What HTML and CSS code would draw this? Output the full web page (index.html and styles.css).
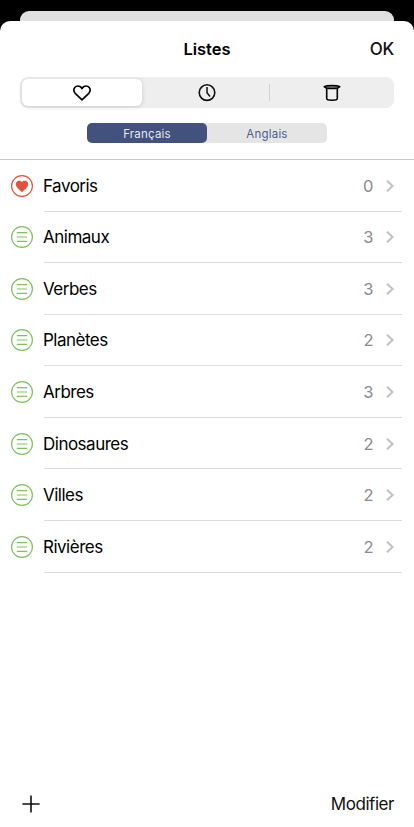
FILE: index.html
```
<!DOCTYPE html>
<html lang="fr">
<head>
<meta charset="utf-8">
<title>Listes</title>
<link rel="stylesheet" href="styles.css">
</head>
<body>
<svg width="0" height="0" class="defs">
  <symbol id="list" viewBox="0 0 22 22">
    <circle cx="11" cy="11" r="10.4" fill="none" stroke="#7fc15c" stroke-width="1.2"/>
    <path d="M5.8 6.6h10.4M5.8 11h10.4M5.8 15.4h10.4" fill="none" stroke="#7fc15c" stroke-width="1.1"/>
  </symbol>
  <symbol id="favorite" viewBox="0 0 22 22">
    <circle cx="11" cy="11" r="10.4" fill="none" stroke="#e0523a" stroke-width="1.2"/>
    <path d="M11 17.2C9.5 15.5 4.9 12.6 4.9 9.2C4.9 7.2 6.2 5.8 8 5.8C9.4 5.8 10.4 6.2 11 7C11.6 6.2 12.6 5.8 14 5.8C15.8 5.8 17.1 7.2 17.1 9.2C17.1 12.6 12.5 15.5 11 17.2Z" fill="#e0523a"/>
  </symbol>
  <symbol id="chevron" viewBox="0 0 8 12">
    <path d="M1 .7L6.6 6L1 11.3" fill="none" stroke="#c0c0c3" stroke-width="2"/>
  </symbol>
</svg>
<div class="backdrop"></div>
<main class="sheet">
  <header class="header">
    <div class="titlebar"><h1 class="title">Listes</h1><span class="ok">OK</span></div>
    <nav class="tabs">
      <div class="tab active">
        <svg width="18" height="16" viewBox="0 0 18 16"><path d="M9 14.8L2.2 8.3C.4 6.1 .8 3.8 1.8 2.6C3.2 .9 5.4 .8 7 1.5C8 2 8.6 2.7 9 3.6C9.4 2.7 10 2 11 1.5C12.6 .8 14.8 .9 16.2 2.6C17.2 3.8 17.6 6.1 15.8 8.3Z" fill="none" stroke="#000" stroke-width="1.6" stroke-linejoin="round"/></svg>
      </div>
      <div class="tab recent">
        <svg width="18" height="18" viewBox="0 0 18 18"><circle cx="9" cy="8.6" r="7.8" fill="none" stroke="#111" stroke-width="1.6"/><path d="M9 3.1V8.8L12 12.4" fill="none" stroke="#111" stroke-width="1.5"/></svg>
      </div>
      <div class="tab last">
        <svg width="18" height="18" viewBox="0 0 18 18"><path d="M3.7 4V14.5C3.7 16.8 14.3 16.8 14.3 14.5V4" fill="none" stroke="#000" stroke-width="1.6"/><path d="M1.2 2.6C4 1.2 14 1.2 16.8 2.6L15 4C11 4.8 7 4.8 3 4Z" fill="#777" stroke="#000" stroke-width="1.5" stroke-linejoin="round"/></svg>
      </div>
    </nav>
    <div class="languages"><span class="language selected">Français</span><span class="language">Anglais</span></div>
  </header>
  <ul class="lists">
    <li class="row"><svg class="icon"><use href="#favorite"/></svg><div class="entry"><span class="name">Favoris</span><span class="count">0</span><svg class="chevron"><use href="#chevron"/></svg></div></li>
    <li class="row"><svg class="icon"><use href="#list"/></svg><div class="entry"><span class="name">Animaux</span><span class="count">3</span><svg class="chevron"><use href="#chevron"/></svg></div></li>
    <li class="row"><svg class="icon"><use href="#list"/></svg><div class="entry"><span class="name">Verbes</span><span class="count">3</span><svg class="chevron"><use href="#chevron"/></svg></div></li>
    <li class="row"><svg class="icon"><use href="#list"/></svg><div class="entry"><span class="name">Planètes</span><span class="count">2</span><svg class="chevron"><use href="#chevron"/></svg></div></li>
    <li class="row"><svg class="icon"><use href="#list"/></svg><div class="entry"><span class="name">Arbres</span><span class="count">3</span><svg class="chevron"><use href="#chevron"/></svg></div></li>
    <li class="row"><svg class="icon"><use href="#list"/></svg><div class="entry"><span class="name">Dinosaures</span><span class="count">2</span><svg class="chevron"><use href="#chevron"/></svg></div></li>
    <li class="row"><svg class="icon"><use href="#list"/></svg><div class="entry"><span class="name">Villes</span><span class="count">2</span><svg class="chevron"><use href="#chevron"/></svg></div></li>
    <li class="row"><svg class="icon"><use href="#list"/></svg><div class="entry"><span class="name">Rivières</span><span class="count">2</span><svg class="chevron"><use href="#chevron"/></svg></div></li>
  </ul>
  <footer class="toolbar">
    <svg width="18" height="18" viewBox="0 0 18 18"><path d="M9 .4V17.6M.4 9H17.6" stroke="#111" stroke-width="1.6"/></svg>
    <span class="edit">Modifier</span>
  </footer>
</main>
</body>
</html>
```
FILE: styles.css
```
* { box-sizing: border-box; }
body {
  margin: 0;
  height: 827px;
  padding-top: 11px;
  display: flex;
  flex-direction: column;
  overflow: hidden;
  background: #000;
  color: #000;
  font-family: Inter, "Liberation Sans", sans-serif;
  font-size: 17px;
}
.defs { position: absolute; }
.backdrop {
  flex: none;
  height: 10px;
  margin: 0 20px;
  background: #e0e0e0;
  border-radius: 9px 9px 0 0;
}
.sheet {
  flex: 1;
  display: flex;
  flex-direction: column;
  background: #fff;
  border-radius: 10px 10px 0 0;
}
.header {
  height: 139px;
  padding: 0 20px;
  border-bottom: 1px solid #c6c6c6;
}
.titlebar {
  display: grid;
  grid-template-columns: 1fr auto 1fr;
  align-items: center;
  height: 56px;
}
.title {
  grid-column: 2;
  margin: 0;
  font-size: 16.5px;
  font-weight: 600;
  letter-spacing: -0.05px;
}
.ok {
  justify-self: end;
  font-weight: 500;
  color: #111;
  letter-spacing: -0.2px;
}
.tabs {
  display: grid;
  grid-template-columns: 122px 127px 125px;
  height: 31px;
  background: #eee;
  border-radius: 8px;
}
.tab {
  display: flex;
  align-items: center;
  justify-content: center;
}
.tab.active {
  margin: 2px 0 2px 2px;
  background: #fff;
  border-radius: 6px;
  box-shadow: 0 1px 4px rgba(0, 0, 0, .16);
}
.tab.recent { padding-left: 2px; }
.tab.last {
  height: 17px;
  margin-top: 7px;
  border-left: 1px solid #d2d2d4;
}
.languages {
  display: flex;
  width: 240px;
  height: 20px;
  margin: 15px 0 0 67px;
  background: #e5e5e5;
  border-radius: 5px;
}
.language {
  flex: 1;
  text-align: center;
  font-size: 11.5px;
  letter-spacing: .2px;
  line-height: 22px;
  color: #4c5d8e;
}
.language.selected {
  color: #e6e9f1;
  background: #42517e;
  border-radius: 5px;
}
.lists {
  margin: 0;
  padding: 0 12px 0 11px;
  list-style: none;
}
.row {
  display: flex;
  align-items: center;
  height: 51.57px;
}
.icon {
  width: 22px;
  height: 22px;
  margin-right: 11px;
}
.entry {
  flex: 1;
  height: 100%;
  display: flex;
  align-items: center;
  border-bottom: 1px solid #dcdcdd;
}
.name {
  flex: 1;
  margin-left: -1px;
  padding-top: 1px;
  letter-spacing: -0.5px;
}
.count {
  padding-top: 1px;
  font-size: 16.5px;
  color: #8a8a8e;
}
.chevron {
  width: 8px;
  height: 12px;
  margin: 1px 8.5px 0 12px;
}
.toolbar {
  display: flex;
  align-items: center;
  justify-content: space-between;
  height: 46px;
  margin-top: auto;
  padding: 0 20px 0 22px;
}
.edit {
  color: #111;
  letter-spacing: -0.45px;
}
```
